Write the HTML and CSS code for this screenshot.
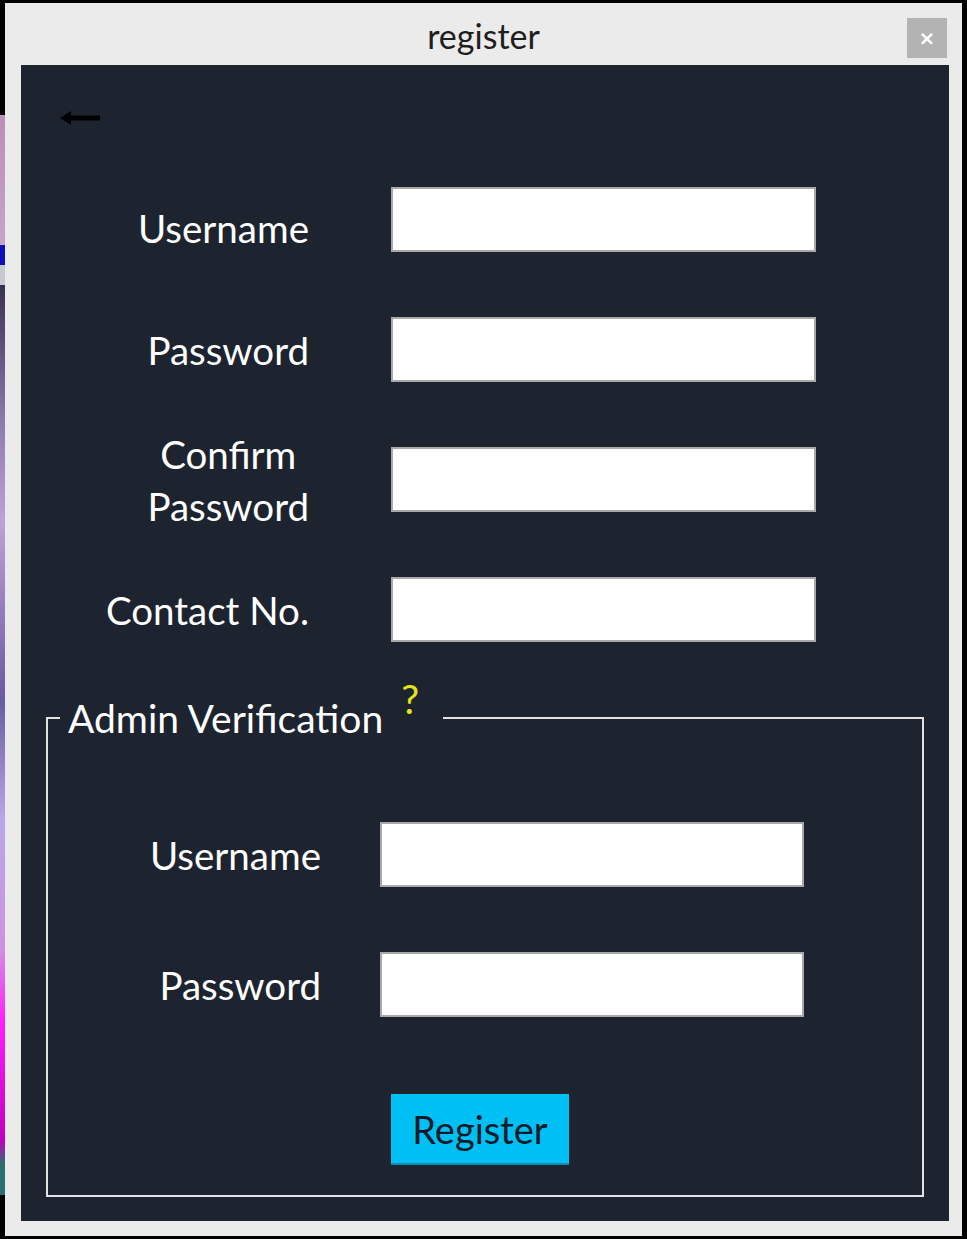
FILE: index.html
```html
<!DOCTYPE html>
<html lang="en">
<head>
<meta charset="utf-8">
<title>register</title>
<link rel="stylesheet" href="styles.css">
</head>
<body>
<div class="window">
  <div class="titlebar">
    <span class="spacer"></span>
    <h1 class="title">register</h1>
    <button class="close" type="button">×</button>
  </div>
  <main class="panel">
    <div class="back">
      <svg width="40" height="16" viewBox="0 0 40 16" aria-hidden="true">
        <path d="M0 8 L11 1 L11 5.5 L40 5.5 L40 10.5 L11 10.5 L11 15 Z" fill="#000"/>
      </svg>
    </div>
    <div class="rows">
      <div class="row">
        <label class="label label-low">Username</label>
        <input class="field" type="text">
      </div>
      <div class="row">
        <label class="label">Password</label>
        <input class="field" type="password">
      </div>
      <div class="row">
        <label class="label"><span class="stack">Confirm<br>Password</span></label>
        <input class="field" type="password">
      </div>
      <div class="row">
        <label class="label">Contact No.</label>
        <input class="field" type="text">
      </div>
    </div>
    <fieldset class="admin">
      <legend class="legend">Admin Verification<span class="help">?</span></legend>
      <div class="admin-rows">
        <div class="row admin-row">
          <label class="label admin-label">Username</label>
          <input class="field admin-field" type="text">
        </div>
        <div class="row admin-row">
          <label class="label admin-label">Password</label>
          <input class="field admin-field" type="password">
        </div>
      </div>
      <button class="register" type="button">Register</button>
    </fieldset>
  </main>
</div>
</body>
</html>
```
FILE: styles.css
```css
* { box-sizing: border-box; }

html, body {
  margin: 0;
  width: 967px;
  height: 1239px;
  overflow: hidden;
}

body {
  background-color: #000;
  background-image: linear-gradient(to bottom,
    #000 0, #000 115px,
    #b98fb8 115px, #c9a3c8 245px,
    #1010b8 245px, #1010b8 265px,
    #c8c8d0 265px, #c8c8d0 285px,
    #3a3050 285px, #8a7ab0 420px, #c0a0d8 520px, #6a5aa0 700px,
    #b8a8e8 820px, #d090e0 950px, #ff20ff 1020px, #c000c0 1140px,
    #2a7070 1165px, #2a7070 1195px, #000 1195px);
  background-size: 5px 100%;
  background-repeat: no-repeat;
  padding: 3px 5px 3px 5px;
  font-family: Lato, "Noto Sans", sans-serif;
}

.window {
  width: 957px;
  height: 1233px;
  background: #ebebeb;
  display: flex;
  flex-direction: column;
  padding: 0 13px 15px 16px;
}

.titlebar {
  flex-shrink: 0;
  height: 62px;
  display: grid;
  grid-template-columns: 1fr auto 1fr;
  align-items: start;
  margin: 0 -13px 0 -16px;
}

.title {
  margin: 0;
  font-family: Lato, "Noto Sans", sans-serif;
  font-weight: 400;
  font-size: 34px;
  line-height: 1;
  color: #1e1e1e;
  padding-top: 16px;
}

.close {
  justify-self: end;
  margin: 15px 15px 0 0;
  width: 40px;
  height: 40px;
  border: none;
  background: #b3b3b3;
  color: #fff;
  font-family: "DejaVu Sans", sans-serif;
  font-size: 20px;
  font-weight: bold;
  line-height: 40px;
  padding: 0;
}

.panel {
  flex: 1;
  min-height: 0;
  overflow: hidden;
  background: #1d2430;
  display: flex;
  flex-direction: column;
}

.back {
  flex-shrink: 0;
  margin: 45px 0 0 39px;
  height: 16px;
  display: flex;
}

.rows {
  flex-shrink: 0;
  margin-top: 61px;
  display: flex;
  flex-direction: column;
  gap: 65px;
}

.row {
  flex-shrink: 0;
  display: flex;
  align-items: center;
  height: 65px;
  gap: 83px;
}

.label {
  width: 288px;
  text-align: right;
  color: #fff;
  font-size: 38.5px;
  line-height: 52px;
  flex-shrink: 0;
}

.row .label { margin-right: -1px; }

.label-low { padding-top: 16px; }

.stack {
  display: inline-block;
  text-align: center;
}

.field {
  flex-shrink: 0;
  width: 425px;
  height: 65px;
  border: 2px solid #a9a9a9;
  background: #fff;
  margin: 0;
  padding: 0 8px;
  font-size: 24px;
  outline: none;
}

.admin {
  flex-shrink: 0;
  margin: 50px 25px 0 25px;
  border: 2px solid #e2e2e2;
  padding: 0;
  min-width: 0;
  height: 505px;
  display: flex;
  flex-direction: column;
}

.legend {
  margin-left: 12px;
  padding: 0 24px 0 8px;
  color: #fff;
  font-size: 39px;
  line-height: 52px;
}

.help {
  color: #e4e41a;
  position: relative;
  top: -19px;
  margin-left: 18px;
  font-size: 40px;
}

.admin-rows {
  margin-top: 78px;
  display: flex;
  flex-direction: column;
  gap: 65px;
}

.admin-row { gap: 60px; }

.admin-label { width: 273px; }

.admin-field { width: 424px; }

.register {
  flex-shrink: 0;
  margin: 77px 0 0 343px;
  width: 178px;
  height: 71px;
  background: #00bff3;
  border: none;
  border-bottom: 2px solid #0a8fb5;
  color: #0d1a2a;
  font-family: Lato, "Noto Sans", sans-serif;
  font-size: 38px;
  padding: 0 0 0 0;
}
```
